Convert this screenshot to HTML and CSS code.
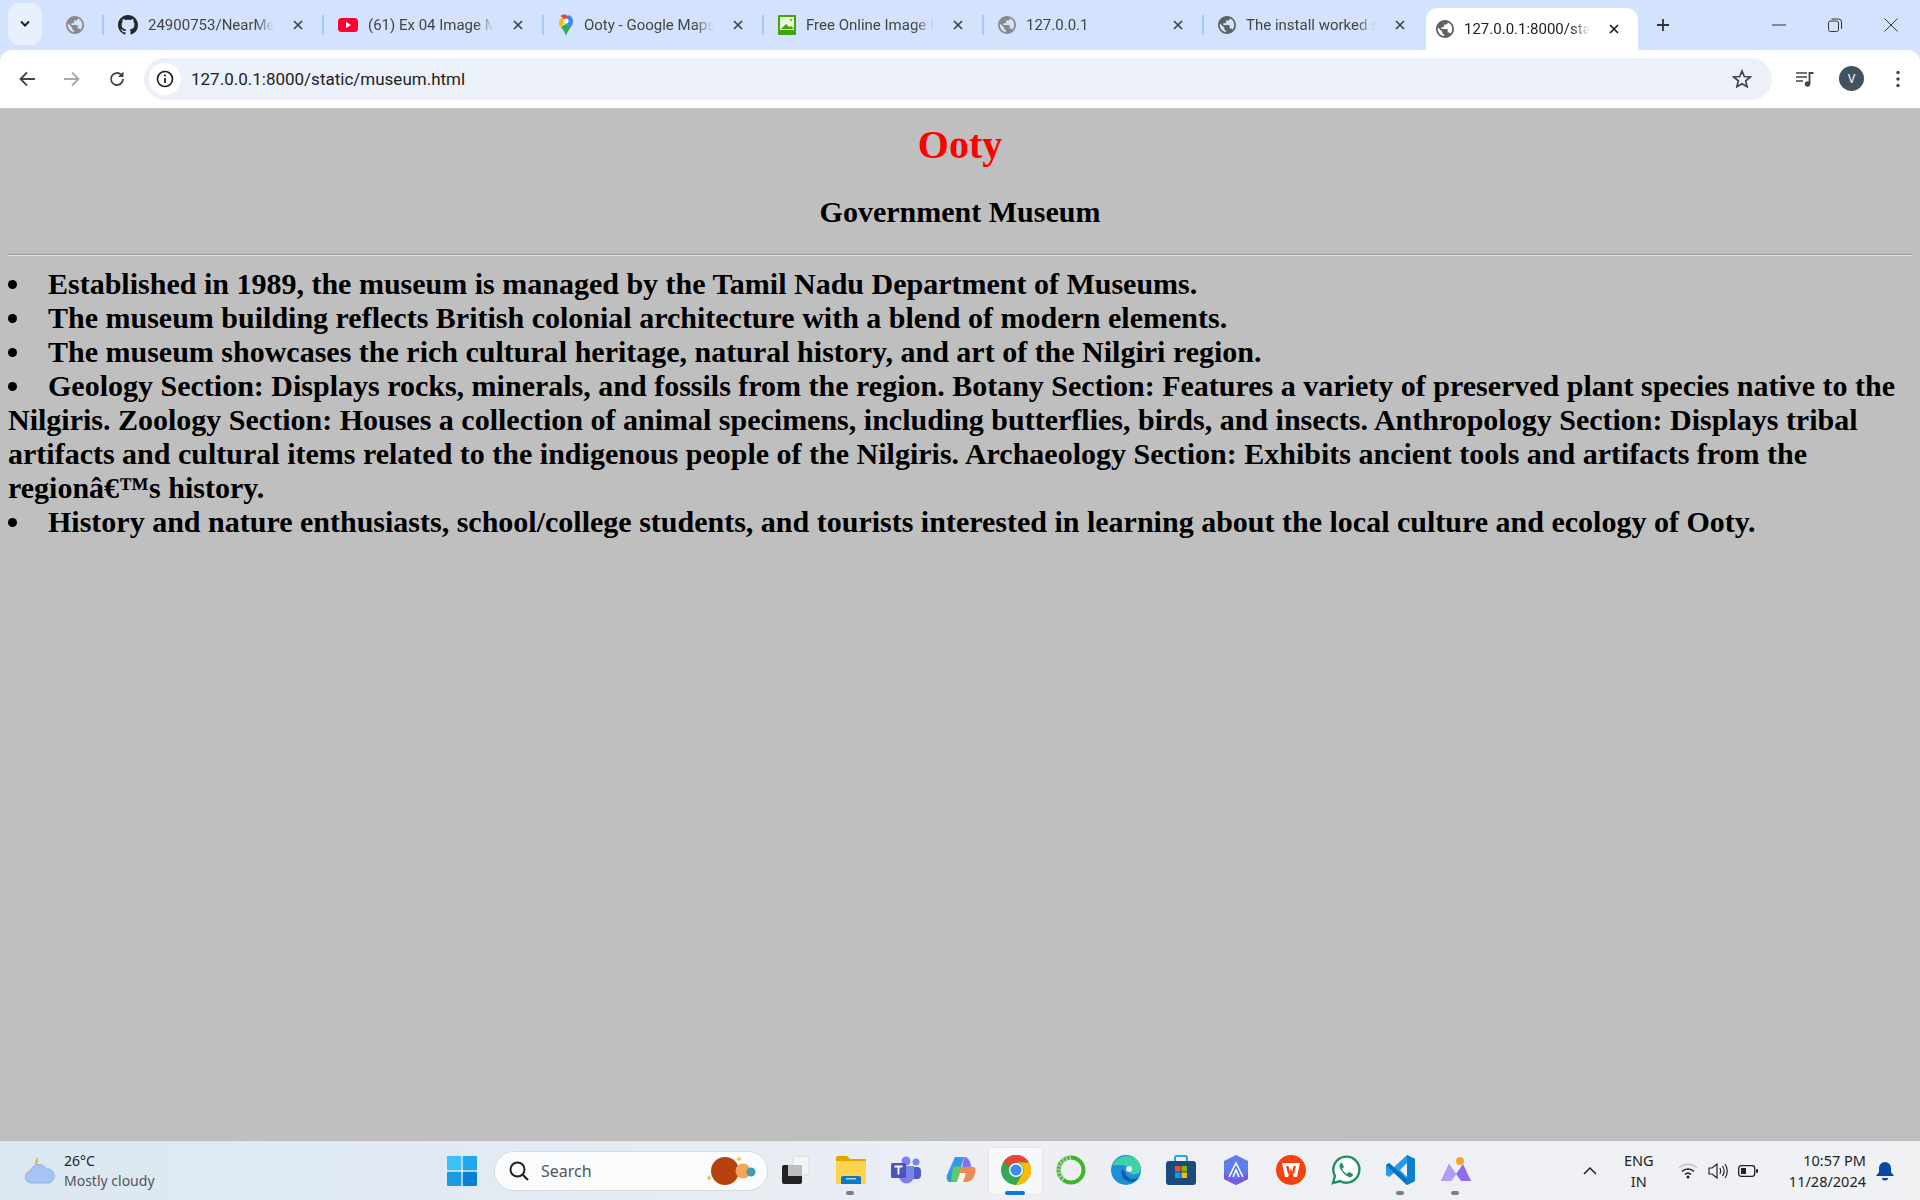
FILE: index.html
```html
<!DOCTYPE html>
<html lang="en">
<head>
  <meta charset="UTF-8">
  <title>Ooty</title>
  <link rel="stylesheet" href="styles.css">
</head>
<body>
  <svg class="defs" width="0" height="0">
    <symbol id="globe" viewBox="2 2 20 20"><path d="M12 2C6.48 2 2 6.48 2 12s4.48 10 10 10 10-4.48 10-10S17.52 2 12 2zm-1 17.93c-3.95-.49-7-3.85-7-7.93 0-.62.08-1.21.21-1.79L9 15v1c0 1.1.9 2 2 2v1.93zm6.9-2.54c-.26-.81-1-1.39-1.9-1.39h-1v-3c0-.55-.45-1-1-1H8v-2h2c.55 0 1-.45 1-1V7h2c1.1 0 2-.9 2-2v-.41c2.93 1.19 5 4.06 5 7.41 0 2.08-.8 3.97-2.1 5.39z"/></symbol>
    <symbol id="close" viewBox="0 0 12 12"><path d="M2 2l8 8M10 2l-8 8" fill="none" stroke="currentColor" stroke-width="1.7"/></symbol>
  </svg>

  <header class="chrome">
    <div class="tabstrip">
      <div class="tab-search"><svg width="12" height="8" viewBox="0 0 12 8"><path d="M2 1.5l4 4 4-4" fill="none" stroke="#1f1f1f" stroke-width="2"/></svg></div>
      <div class="pinned"><svg class="fav globe-light" width="18" height="18"><use href="#globe"/></svg></div>
      <div class="tab">
        <svg class="fav" width="20" height="20" viewBox="0 0 16 16"><path fill="#24292f" d="M8 0C3.58 0 0 3.58 0 8c0 3.54 2.29 6.53 5.47 7.59.4.07.55-.17.55-.38 0-.19-.01-.82-.01-1.49-2.01.37-2.53-.49-2.69-.94-.09-.23-.48-.94-.82-1.13-.28-.15-.68-.52-.01-.53.63-.01 1.08.58 1.23.82.72 1.21 1.87.87 2.33.66.07-.52.28-.87.51-1.07-1.78-.2-3.64-.89-3.64-3.95 0-.87.31-1.59.82-2.15-.08-.2-.36-1.02.08-2.12 0 0 .67-.21 2.2.82.64-.18 1.32-.27 2-.27.68 0 1.36.09 2 .27 1.53-1.04 2.2-.82 2.2-.82.44 1.1.16 1.92.08 2.12.51.56.82 1.27.82 2.15 0 3.07-1.87 3.75-3.65 3.95.29.25.54.73.54 1.48 0 1.07-.01 1.93-.01 2.2 0 .21.15.46.55.38A8.013 8.013 0 0016 8c0-4.42-3.58-8-8-8z"/></svg>
        <span class="tab-title">24900753/NearMe</span>
        <svg class="tab-close" width="12" height="12"><use href="#close"/></svg>
      </div>
      <div class="tab">
        <svg class="fav" width="20" height="14" viewBox="0 0 20 14"><rect width="20" height="14" rx="3.5" fill="#ff0033"/><path d="M8 4l5 3-5 3z" fill="#fff"/></svg>
        <span class="tab-title">(61) Ex 04 Image Manipulation</span>
        <svg class="tab-close" width="12" height="12"><use href="#close"/></svg>
      </div>
      <div class="tab">
        <svg class="fav" width="16" height="24" viewBox="0 0 16 24"><path fill="#34a853" d="M8 23c-1-4-3-6-5-9l5-3 5 3c-2 3-4 5-5 9z"/><path fill="#fbbc04" d="M1 11.500c.3 1 1 1.700 2 2.500l5-6-3.500-3.500C2.500 5.500 .5 8 1 11.500z"/><path fill="#ea4335" d="M2.500 3L8 8l3-3.500C9.500 1 4.500 .5 2.500 3z"/><path fill="#4285f4" d="M15 8c0-3-2-5-4-6L5 9l3 2 5 3c1-1.500 2-3.500 2-6z"/><circle cx="8" cy="8" r="2.600" fill="#fff"/></svg>
        <span class="tab-title">Ooty - Google Maps</span>
        <svg class="tab-close" width="12" height="12"><use href="#close"/></svg>
      </div>
      <div class="tab">
        <svg class="fav" width="18" height="20" viewBox="0 0 18 20"><rect width="18" height="20" rx="1" fill="#43a30c"/><rect x="2" y="2" width="14" height="13" fill="#e8f5d8"/><path d="M3 14l5-5 3 3 2-1 3 3z" fill="#43a30c"/><circle cx="13" cy="5" r="1" fill="#43a30c"/></svg>
        <span class="tab-title">Free Online Image Maker</span>
        <svg class="tab-close" width="12" height="12"><use href="#close"/></svg>
      </div>
      <div class="tab">
        <svg class="fav globe-light" width="18" height="18"><use href="#globe"/></svg>
        <span class="tab-title">127.0.0.1</span>
        <svg class="tab-close" width="12" height="12"><use href="#close"/></svg>
      </div>
      <div class="tab tab-last">
        <svg class="fav globe-dark" width="18" height="18"><use href="#globe"/></svg>
        <span class="tab-title">The install worked successfully</span>
        <svg class="tab-close" width="12" height="12"><use href="#close"/></svg>
      </div>
      <div class="tab tab-active">
        <svg class="fav globe-dark" width="18" height="18"><use href="#globe"/></svg>
        <span class="tab-title">127.0.0.1:8000/static/museum.html</span>
        <svg class="tab-close" width="12" height="12"><use href="#close"/></svg>
      </div>
      <div class="new-tab"><svg width="14" height="14" viewBox="0 0 14 14"><path d="M7 1v12M1 7h12" stroke="#333" stroke-width="1.800"/></svg></div>
      <div class="win-controls">
        <svg width="14" height="14" viewBox="0 0 14 14"><path d="M0 7h14" stroke="#333" stroke-width="1"/></svg>
        <svg width="14" height="14" viewBox="0 0 14 14"><rect x=".5" y="3" width="10" height="10.500" rx="2" fill="none" stroke="#333"/><path d="M3.500 1h7a3 3 0 0 1 3 3v7" fill="none" stroke="#333"/></svg>
        <svg width="14" height="14" viewBox="0 0 14 14"><path d="M.5.5l13 13M13.500.5l-13 13" stroke="#333" stroke-width="1"/></svg>
      </div>
    </div>
    <div class="toolbar">
      <svg class="nav-btn" width="18" height="18" viewBox="0 0 18 18"><path d="M17 9H3M9 2.500L2.500 9 9 15.500" fill="none" stroke="#444" stroke-width="1.800"/></svg>
      <svg class="nav-btn" width="18" height="18" viewBox="0 0 18 18"><path d="M1 9h14M9 2.500L15.500 9 9 15.500" fill="none" stroke="#a9a9a9" stroke-width="1.800"/></svg>
      <svg class="nav-btn" width="18" height="18" viewBox="0 0 18 18"><path d="M15 9a6 6 0 1 1-1.800-4.300" fill="none" stroke="#444" stroke-width="1.800"/><path d="M15.500 1.500v5.500H10z" fill="#444"/></svg>
      <div class="omnibox">
        <div class="site-info"><svg width="18" height="18" viewBox="0 0 18 18"><circle cx="9" cy="9" r="7.500" fill="none" stroke="#222" stroke-width="1.700"/><path d="M9 8v5" stroke="#222" stroke-width="1.800"/><circle cx="9" cy="5.500" r="1.100" fill="#222"/></svg></div>
        <span class="url">127.0.0.1:8000/static/museum.html</span>
        <svg class="star" width="20" height="20" viewBox="0 0 20 20"><path d="M10 2l2.300 5.500 6 .5-4.600 3.900 1.400 5.900L10 14.700l-5.100 3.100 1.400-5.900L1.700 8l6-.5z" fill="none" stroke="#444" stroke-width="1.700"/></svg>
      </div>
      <svg class="media" width="20" height="18" viewBox="0 0 20 18"><path d="M1 3h11M1 7h11M1 11h7" stroke="#444" stroke-width="1.700"/><path d="M14.500 14V3h4" fill="none" stroke="#444" stroke-width="1.800"/><circle cx="12.500" cy="14" r="2.700" fill="#444"/></svg>
      <div class="avatar">V</div>
      <svg class="menu-dots" width="4" height="18" viewBox="0 0 4 18"><circle cx="2" cy="2.500" r="1.700" fill="#444"/><circle cx="2" cy="9" r="1.700" fill="#444"/><circle cx="2" cy="15.500" r="1.700" fill="#444"/></svg>
    </div>
  </header>

  <main class="page">
    <h1 class="title">Ooty</h1>
    <h2 class="subtitle">Government Museum</h2>
    <hr class="rule">
    <ul class="facts">
      <li>Established in 1989, the museum is managed by the Tamil Nadu Department of Museums.</li>
      <li>The museum building reflects British colonial architecture with a blend of modern elements.</li>
      <li>The museum showcases the rich cultural heritage, natural history, and art of the Nilgiri region.</li>
      <li>Geology Section: Displays rocks, minerals, and fossils from the region. Botany Section: Features a variety of preserved plant species native to the Nilgiris. Zoology Section: Houses a collection of animal specimens, including butterflies, birds, and insects. Anthropology Section: Displays tribal artifacts and cultural items related to the indigenous people of the Nilgiris. Archaeology Section: Exhibits ancient tools and artifacts from the regionâ€™s history.</li>
      <li>History and nature enthusiasts, school/college students, and tourists interested in learning about the local culture and ecology of Ooty.</li>
    </ul>
  </main>

  <footer class="taskbar">
    <div class="weather">
      <svg width="32" height="32" viewBox="0 0 32 32"><path d="M14 2a9 9 0 0 0 3 15 9 9 0 0 1-12-3c4 1 10-3 9-12z" fill="#f3ae2d"/><path d="M8 28a6 6 0 0 1-1-12 8 8 0 0 1 15-2 6.500 7 0 0 1 3 14z" fill="#a6c6f2" stroke="#8db0ea"/></svg>
      <div class="weather-text"><span class="temp">26°C</span><span class="sky">Mostly cloudy</span></div>
    </div>
    <svg class="start" width="30" height="30" viewBox="0 0 30 30"><rect width="14.300" height="14.300" rx="1" fill="#3cc0f7"/><rect x="15.700" width="14.300" height="14.300" rx="1" fill="#22a7ee"/><rect y="15.700" width="14.300" height="14.300" rx="1" fill="#1b9be6"/><rect x="15.700" y="15.700" width="14.300" height="14.300" rx="1" fill="#0a7fd8"/></svg>
    <div class="search">
      <svg width="22" height="22" viewBox="0 0 22 22"><circle cx="9.500" cy="9.500" r="7" fill="none" stroke="#222" stroke-width="2"/><path d="M14.500 14.500l5.500 5.500" stroke="#222" stroke-width="2.200"/></svg>
      <span class="search-label">Search</span>
      <svg class="search-art" width="52" height="36" viewBox="0 0 52 36"><circle cx="18" cy="18" r="14" fill="#b8420f"/><circle cx="36" cy="18" r="7.500" fill="#f3a55a"/><circle cx="44" cy="19" r="4.500" fill="#3f9fb0"/><path d="M2 22l1 2 2 1-2 1-1 2-1-2-2-1 2-1zM32 3l1 2 2 1-2 1-1 2-1-2-2-1 2-1z" fill="#f5c242"/></svg>
    </div>
    <div class="apps">
      <div class="app">
        <svg width="30" height="30" viewBox="0 0 30 30"><rect x="12" y="1" width="16" height="19" rx="2" fill="#f4f4f4" stroke="#ddd"/><rect x="1" y="10" width="20" height="19" rx="2" fill="#222"/><rect x="7" y="10" width="14" height="11" fill="#bdbdbd"/></svg>
      </div>
      <div class="app app-open">
        <svg width="30" height="30" viewBox="0 0 30 30"><path d="M0 3a2 2 0 0 1 2-2h9l3 3h16v4H0z" fill="#e3a400"/><rect y="6" width="30" height="23" rx="1" fill="#fcd34d"/><path d="M5 29v-6a2 2 0 0 1 2-2h16a2 2 0 0 1 2 2v6z" fill="#0f78c4"/><rect x="10" y="23" width="10" height="1.500" fill="#9fd6f5"/></svg>
      </div>
      <div class="app">
        <svg width="30" height="30" viewBox="0 0 30 30"><circle cx="25" cy="7" r="3.500" fill="#7b83eb"/><rect x="20" y="12" width="10" height="12" rx="4" fill="#5059c9"/><circle cx="15" cy="6" r="4.500" fill="#7b83eb"/><path d="M8 11h15v10a7 7 0 0 1-15 0z" fill="#7b83eb"/><rect y="8" width="15" height="15" rx="1.500" fill="#4b53bc"/><path d="M3.500 11.500h8M7.500 11.500v8" stroke="#fff" stroke-width="1.800"/></svg>
      </div>
      <div class="app">
        <svg width="30" height="30" viewBox="0 0 30 30"><path d="M9 2h9l-6 20c-1 4-4 5-7 5H3c-2-1-3-4-2-7z" fill="#2f9be8"/><path d="M18 2c3 0 5 2 6 5l3 11H15z" fill="#8a6fe8"/><path d="M7 12c3-1 6-1 9 0l-5 15H5z" fill="#5ecb6a"/><path d="M15 12h12c3 0 3 3 2 6-1 5-4 9-9 9h-9z" fill="#f08a54"/><path d="M14 18h6l-3 9h-6z" fill="#f5f5f5"/></svg>
      </div>
      <div class="app app-active">
        <svg width="30" height="30" viewBox="0 0 30 30"><circle cx="15" cy="15" r="15" fill="#34a853"/><path d="M15 0a15 15 0 0 1 13 7.500H15a7.500 7.500 0 0 0-6.500 3.750L2 7.500A15 15 0 0 1 15 0z" fill="#ea4335"/><path d="M28 7.500A15 15 0 0 1 15 30l6.500-11.250A7.500 7.500 0 0 0 15 7.500z" fill="#fbbc04"/><circle cx="15" cy="15" r="7" fill="#fff"/><circle cx="15" cy="15" r="5.600" fill="#4285f4"/></svg>
      </div>
      <div class="app">
        <svg width="30" height="30" viewBox="0 0 30 30"><circle cx="15" cy="15" r="12.500" fill="none" stroke="#3fb52b" stroke-width="4"/><path d="M15 2.500A12.500 12.500 0 0 0 8 25" fill="none" stroke="#9dcf92" stroke-width="4" stroke-dasharray="2 1.500"/></svg>
      </div>
      <div class="app">
        <svg width="30" height="30" viewBox="0 0 30 30"><circle cx="15" cy="15" r="15" fill="#1e90d6"/><path d="M2 10C5 2 18-3 26 5c4 4 5 10 2 13-3 2-9 2-10-1-1-2 0-5-3-6-5-2-12 0-13-1z" fill="#3fd2a9"/><path d="M11 14c-2 5 1 12 9 13 3 0 6-2 8-4-3 1-8 2-11-1-3-2-3-6-6-8z" fill="#0b5cad"/><circle cx="18" cy="14" r="3" fill="#eef0f4"/></svg>
      </div>
      <div class="app">
        <svg width="30" height="30" viewBox="0 0 30 30"><path d="M9 7V3a2 2 0 0 1 2-2h8a2 2 0 0 1 2 2v4" fill="none" stroke="#2aa4e0" stroke-width="2"/><rect y="6" width="30" height="24" rx="3" fill="#1b4a7e"/><rect x="9" y="11" width="5.500" height="5.500" fill="#f25022"/><rect x="15.500" y="11" width="5.500" height="5.500" fill="#7fba00"/><rect x="9" y="17.500" width="5.500" height="5.500" fill="#00a4ef"/><rect x="15.500" y="17.500" width="5.500" height="5.500" fill="#ffb900"/></svg>
      </div>
      <div class="app">
        <svg width="30" height="30" viewBox="0 0 30 30"><path d="M15 0l12 6v18l-12 6-12-6V6z" fill="#5d7de8"/><path d="M3 24l12 6 12-6v-6L15 24 3 18z" fill="#7a5ae0"/><path d="M8 22l7-14 7 14M12 22l3-7 3 7" fill="none" stroke="#fff" stroke-width="1.500"/></svg>
      </div>
      <div class="app">
        <svg width="30" height="30" viewBox="0 0 30 30"><circle cx="15" cy="15" r="15" fill="#f4420f"/><path d="M6 8h18l-3 14h-3l-3-8-3 8H9z" fill="#fff"/><path d="M10 11h2.500l1.300 6 1.200-4 1.200 4 1.300-6H20l-2 8h-1l-2-4-2 4h-1z" fill="#f4420f"/></svg>
      </div>
      <div class="app">
        <svg width="30" height="30" viewBox="0 0 30 30"><path d="M2 28l2-7A13 13 0 1 1 9 26z" fill="#fff" stroke="#1f8f5f" stroke-width="2.400"/><path d="M10 8c-2 1-2 4 0 7s5 6 8 7c2 1 4-1 4-3l-4-2-2 2c-2-1-4-3-5-5l2-2-2-4z" fill="#1f8f5f"/></svg>
      </div>
      <div class="app app-open">
        <svg width="30" height="30" viewBox="0 0 30 30"><path d="M21 0l8 4v22l-8 4-13-12-5 4-3-2v-10l3-2 5 4z" fill="#1f9cf0"/><path d="M21 8l-7 7 7 7z" fill="#eef0f4"/><path d="M21 0l8 4v22l-8 4z" fill="#0f7fd1"/><path d="M0 10l3-2 18 16v6L0 10z" fill="#0c6fb8"/></svg>
      </div>
      <div class="app app-open">
        <svg width="30" height="30" viewBox="0 0 30 30"><circle cx="19" cy="6" r="4" fill="#f5a623"/><path d="M0 26L8 9l7 10 7-10 8 17H20l-5-7-5 7z" fill="#8e6cf0"/><path d="M8 9l7 10-5 7H0z" fill="#b29cf6"/></svg>
      </div>
    </div>
    <div class="tray">
      <svg class="tray-caret" width="14" height="8" viewBox="0 0 14 8"><path d="M1 7l6-6 6 6" fill="none" stroke="#222" stroke-width="1.500"/></svg>
      <div class="lang"><span>ENG</span><span>IN</span></div>
      <svg class="wifi" width="20" height="16" viewBox="0 0 20 16"><path d="M1 5c5-5 13-5 18 0" fill="none" stroke="#c4c4c4" stroke-width="1.500"/><path d="M4 8.500c3.500-3.300 8.500-3.300 12 0M7 11.500c2-1.800 4-1.800 6 0" fill="none" stroke="#222" stroke-width="1.500"/><circle cx="10" cy="14" r="1.500" fill="#222"/></svg>
      <svg class="speaker" width="20" height="16" viewBox="0 0 20 16"><path d="M1 5h3l5-4v14l-5-4H1z" fill="none" stroke="#222" stroke-width="1.200"/><path d="M12 5c1 2 1 4 0 6M14.500 3c2 3 2 7 0 10M17 1c3 4 3 10 0 14" fill="none" stroke="#222" stroke-width="1.200"/></svg>
      <svg class="battery" width="20" height="14" viewBox="0 0 20 14"><rect x=".7" y="1.700" width="16" height="10.600" rx="2.500" fill="none" stroke="#222" stroke-width="1.300"/><rect x="3" y="4" width="5" height="6" fill="#222"/><rect x="18" y="5" width="2" height="4" rx="1" fill="#222"/></svg>
      <div class="clock"><span>10:57 PM</span><span>11/28/2024</span></div>
      <svg class="bell" width="18" height="20" viewBox="0 0 18 20"><path d="M9 1a6 6 0 0 0-6 6v4l-3 4h18l-3-4V7a6 6 0 0 0-6-6z" fill="#0a46a8"/><path d="M6 17a3 2.500 0 0 0 6 0z" fill="#0a46a8"/></svg>
    </div>
  </footer>
</body>
</html>
```

FILE: styles.css
```css
* {
  box-sizing: border-box;
}

html, body {
  height: 100%;
}

body {
  margin: 0;
  display: flex;
  flex-direction: column;
  overflow: hidden;
  background: #bfbfbf;
  font-family: "Liberation Serif", serif;
}

.defs {
  position: absolute;
}

/* browser frame */
.chrome {
  flex: none;
  background: #d3e3fd;
  font-family: Roboto, "Noto Sans", sans-serif;
  color: #333;
}

.tabstrip {
  height: 50px;
  display: flex;
  align-items: center;
}

.tab-search {
  width: 34px;
  height: 42px;
  margin: -2px 0 0 8px;
  background: #e8f0fe;
  border-radius: 11px;
  display: flex;
  align-items: center;
  justify-content: center;
}

.pinned {
  width: 62px;
  height: 20px;
  padding-left: 24px;
  border-right: 2px solid #a8c7fa;
  display: flex;
  align-items: center;
}

.globe-light {
  fill: #8a8a8a;
}

.globe-dark {
  fill: #5f6368;
}

.tab {
  width: 220px;
  height: 20px;
  padding: 0 14px 0 14px;
  border-right: 2px solid #a8c7fa;
  display: flex;
  align-items: center;
  gap: 10px;
  font-size: 15px;
}

.fav {
  flex: none;
}

.tab-title {
  flex: 1;
  min-width: 0;
  white-space: nowrap;
  overflow: hidden;
  color: #444;
  -webkit-mask-image: linear-gradient(to right, #000 85%, transparent);
  mask-image: linear-gradient(to right, #000 85%, transparent);
}

.tab-close {
  flex: none;
  margin-left: 8px;
  margin-right: 4px;
  color: #444;
}

.tab-last {
  border-right: none;
}

.tab-active {
  position: relative;
  width: 212px;
  height: 42px;
  margin: 8px 0 0 2px;
  padding: 0 14px 0 10px;
  background: #fff;
  border: none;
  border-radius: 12px 12px 0 0;
}

.tab-active .tab-title {
  color: #1f1f1f;
}

.tab-active .tab-close {
  color: #1f1f1f;
}

.new-tab {
  width: 50px;
  display: flex;
  justify-content: center;
  margin-left: 0;
}

.win-controls {
  display: flex;
  gap: 42px;
  margin-left: auto;
  padding-right: 22px;
}

.toolbar {
  height: 59px;
  padding: 0 20px 1px 18px;
  background: #fff;
  border-radius: 12px 12px 0 0;
  border-bottom: 1px solid #c6c6c6;
  display: flex;
  align-items: center;
}

.nav-btn {
  flex: none;
  margin-right: 27px;
}

.omnibox {
  flex: 1;
  height: 42px;
  margin: 0 0 0 -9px;
  padding: 0 20px 0 5px;
  background: #ecf0f9;
  border-radius: 21px;
  display: flex;
  align-items: center;
}

.site-info {
  width: 32px;
  height: 32px;
  background: #fff;
  border-radius: 50%;
  display: flex;
  align-items: center;
  justify-content: center;
}

.url {
  flex: 1;
  margin-left: 10px;
  font-size: 17px;
  color: #222;
}

.media {
  margin: 0 0 0 23px;
}

.avatar {
  width: 25px;
  height: 25px;
  margin-left: 24px;
  border-radius: 50%;
  background: #41535f;
  color: #fff;
  font-size: 12px;
  display: flex;
  align-items: center;
  justify-content: center;
}

.menu-dots {
  margin-left: 32px;
}

/* page content */
.page {
  flex: 1;
  min-height: 0;
  padding: 0 8px;
  color: #000;
  font-weight: bold;
}

.title {
  margin: 12px 0 0;
  font-size: 40px;
  text-align: center;
  color: #ff0000;
}

.subtitle {
  margin: 27px 0 0;
  font-size: 30px;
  text-align: center;
}

.rule {
  margin: 25px 0 0;
  border: 0;
  border-top: 1px solid #9a9a9a;
  border-bottom: 1px solid #e2e2e2;
}

.facts {
  margin: 11px 0 0;
  padding: 0;
  list-style: inside disc;
  font-size: 30px;
}

/* windows taskbar */
.taskbar {
  flex: none;
  height: 60px;
  background: linear-gradient(to right, #dbe7f1, #e3ebf3 30%, #eeeff4 55%, #f0f1f3);
  border-top: 1px solid #b9bcc0;
  display: flex;
  align-items: center;
  font-family: "Noto Sans", Roboto, sans-serif;
  color: #222;
}

.weather {
  width: 447px;
  padding-left: 24px;
  display: flex;
  align-items: center;
  gap: 8px;
}

.weather-text {
  display: flex;
  flex-direction: column;
  font-size: 14px;
  line-height: 20px;
}

.sky {
  color: #555;
}

.start {
  flex: none;
}

.search {
  width: 274px;
  height: 40px;
  margin-left: 17px;
  padding: 0 8px 0 13px;
  background: #fafbfd;
  border: 1px solid #d8dce2;
  border-radius: 20px;
  display: flex;
  align-items: center;
  gap: 11px;
}

.search-label {
  flex: 1;
  font-size: 16px;
  color: #555;
}

.apps {
  display: flex;
  margin-left: 0;
}

.app {
  position: relative;
  width: 55px;
  height: 48px;
  display: flex;
  align-items: center;
  justify-content: center;
}

.app svg {
  margin-top: -2px;
}

.app-open::after {
  content: "";
  position: absolute;
  left: 23px;
  bottom: 0;
  width: 8px;
  height: 4px;
  border-radius: 2px;
  background: #7d7d7d;
}

.app-active {
  background: #f7f8fa;
  border-radius: 4px;
  box-shadow: inset 0 0 0 1px #e6e8ec;
}

.app-active::after {
  content: "";
  position: absolute;
  left: 17px;
  bottom: 0;
  width: 20px;
  height: 4px;
  border-radius: 2px;
  background: #0a78d4;
}

.tray {
  flex: 1;
  display: flex;
  align-items: center;
  padding-right: 26px;
  margin-left: 100px;
  font-size: 14.5px;
}

.lang, .clock {
  display: flex;
  flex-direction: column;
  line-height: 21px;
}

.lang {
  margin-left: 27px;
  text-align: center;
}

.wifi {
  margin-left: 24px;
}

.speaker {
  margin-left: 10px;
}

.battery {
  margin-left: 10px;
}

.clock {
  margin-left: auto;
  text-align: right;
}

.bell {
  margin-left: 10px;
}
```
